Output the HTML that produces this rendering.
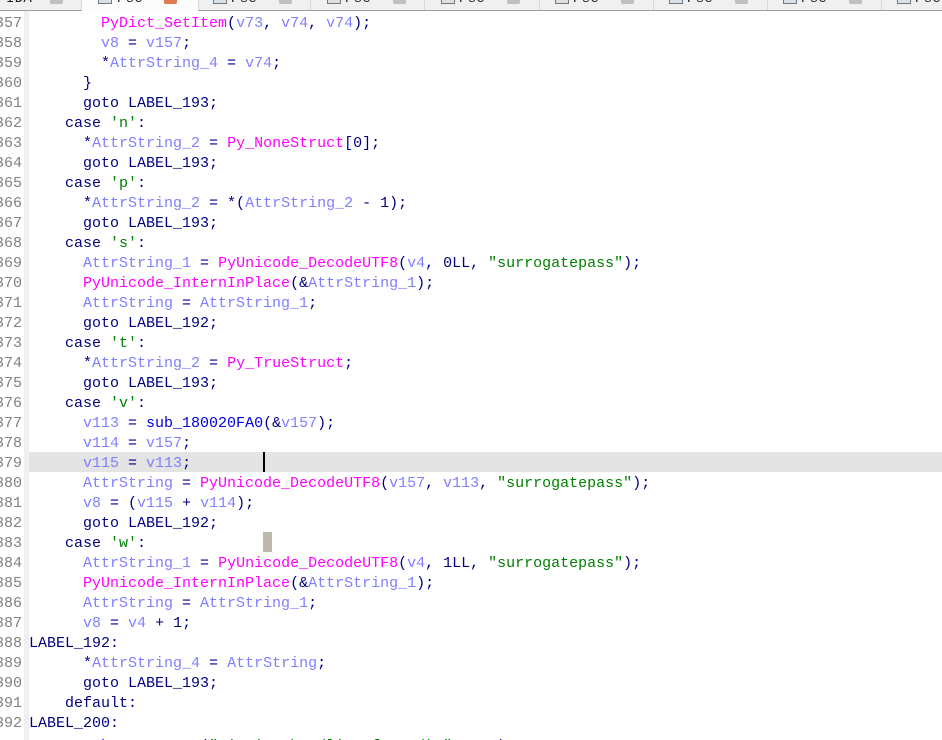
<!DOCTYPE html>
<html><head><meta charset="utf-8"><style>
html,body{margin:0;padding:0;background:#fff}
#r{position:relative;width:942px;height:740px;overflow:hidden;background:#fff;font:15px/20px "Liberation Mono",monospace;color:#000080}
.l{position:absolute;left:29px;white-space:pre;height:20px;margin-top:2px}
.n{position:absolute;left:-5px;width:27px;text-align:right;color:#808080;white-space:pre;height:20px;margin-top:2px}
i{font-style:normal;color:#8080ff}
b{font-weight:normal;color:#ff00ff}
u{text-decoration:none;color:#008000}
s{text-decoration:none;color:#0000e0}
.tb{position:absolute;left:0;top:0;width:942px;height:10px;background:#f0f0f0;border-bottom:1px solid #a0a0a0;overflow:hidden}
.t{position:absolute;top:-9px;font:14px/16px "Liberation Mono",monospace;color:#222;white-space:pre;letter-spacing:.3px}
.ic{position:absolute;top:0;width:12px;height:3px;background:#d8e0e8;border:1px solid #777;border-top:0}
.c{position:absolute;top:0;width:13px;height:4px;background:#c0c0c0;border-radius:0 0 2px 2px}
.d{position:absolute;top:0;width:1px;height:10px;background:#d8d8d8}
</style></head><body><div id="r">
<div style="position:absolute;left:24px;top:11px;width:5px;height:729px;background:#f0f0f0"></div>
<div style="position:absolute;left:29px;top:452px;width:913px;height:20px;background:#e4e4e4"></div>
<div style="position:absolute;left:263px;top:532px;width:9px;height:20px;background:#bdb9ae"></div>
<div style="position:absolute;left:262.5px;top:452px;width:2px;height:20px;background:#000"></div>

<div class="n" style="top:12px">357</div><div class="l" style="top:12px">        <b>PyDict_SetItem</b>(<i>v73</i>, <i>v74</i>, <i>v74</i>);</div>
<div class="n" style="top:32px">358</div><div class="l" style="top:32px">        <i>v8</i> = <i>v157</i>;</div>
<div class="n" style="top:52px">359</div><div class="l" style="top:52px">        *<i>AttrString_4</i> = <i>v74</i>;</div>
<div class="n" style="top:72px">360</div><div class="l" style="top:72px">      }</div>
<div class="n" style="top:92px">361</div><div class="l" style="top:92px">      goto LABEL_193;</div>
<div class="n" style="top:112px">362</div><div class="l" style="top:112px">    case <u>'n'</u>:</div>
<div class="n" style="top:132px">363</div><div class="l" style="top:132px">      *<i>AttrString_2</i> = <b>Py_NoneStruct</b>[0];</div>
<div class="n" style="top:152px">364</div><div class="l" style="top:152px">      goto LABEL_193;</div>
<div class="n" style="top:172px">365</div><div class="l" style="top:172px">    case <u>'p'</u>:</div>
<div class="n" style="top:192px">366</div><div class="l" style="top:192px">      *<i>AttrString_2</i> = *(<i>AttrString_2</i> - 1);</div>
<div class="n" style="top:212px">367</div><div class="l" style="top:212px">      goto LABEL_193;</div>
<div class="n" style="top:232px">368</div><div class="l" style="top:232px">    case <u>'s'</u>:</div>
<div class="n" style="top:252px">369</div><div class="l" style="top:252px">      <i>AttrString_1</i> = <b>PyUnicode_DecodeUTF8</b>(<i>v4</i>, 0LL, <u>"surrogatepass"</u>);</div>
<div class="n" style="top:272px">370</div><div class="l" style="top:272px">      <b>PyUnicode_InternInPlace</b>(&amp;<i>AttrString_1</i>);</div>
<div class="n" style="top:292px">371</div><div class="l" style="top:292px">      <i>AttrString</i> = <i>AttrString_1</i>;</div>
<div class="n" style="top:312px">372</div><div class="l" style="top:312px">      goto LABEL_192;</div>
<div class="n" style="top:332px">373</div><div class="l" style="top:332px">    case <u>'t'</u>:</div>
<div class="n" style="top:352px">374</div><div class="l" style="top:352px">      *<i>AttrString_2</i> = <b>Py_TrueStruct</b>;</div>
<div class="n" style="top:372px">375</div><div class="l" style="top:372px">      goto LABEL_193;</div>
<div class="n" style="top:392px">376</div><div class="l" style="top:392px">    case <u>'v'</u>:</div>
<div class="n" style="top:412px">377</div><div class="l" style="top:412px">      <i>v113</i> = <s>sub_180020FA0</s>(&amp;<i>v157</i>);</div>
<div class="n" style="top:432px">378</div><div class="l" style="top:432px">      <i>v114</i> = <i>v157</i>;</div>
<div class="n" style="top:452px">379</div><div class="l" style="top:452px">      <i>v115</i> = <i>v113</i>;</div>
<div class="n" style="top:472px">380</div><div class="l" style="top:472px">      <i>AttrString</i> = <b>PyUnicode_DecodeUTF8</b>(<i>v157</i>, <i>v113</i>, <u>"surrogatepass"</u>);</div>
<div class="n" style="top:492px">381</div><div class="l" style="top:492px">      <i>v8</i> = (<i>v115</i> + <i>v114</i>);</div>
<div class="n" style="top:512px">382</div><div class="l" style="top:512px">      goto LABEL_192;</div>
<div class="n" style="top:532px">383</div><div class="l" style="top:532px">    case <u>'w'</u>:</div>
<div class="n" style="top:552px">384</div><div class="l" style="top:552px">      <i>AttrString_1</i> = <b>PyUnicode_DecodeUTF8</b>(<i>v4</i>, 1LL, <u>"surrogatepass"</u>);</div>
<div class="n" style="top:572px">385</div><div class="l" style="top:572px">      <b>PyUnicode_InternInPlace</b>(&amp;<i>AttrString_1</i>);</div>
<div class="n" style="top:592px">386</div><div class="l" style="top:592px">      <i>AttrString</i> = <i>AttrString_1</i>;</div>
<div class="n" style="top:612px">387</div><div class="l" style="top:612px">      <i>v8</i> = <i>v4</i> + 1;</div>
<div class="n" style="top:632px">388</div><div class="l" style="top:632px">LABEL_192:</div>
<div class="n" style="top:652px">389</div><div class="l" style="top:652px">      *<i>AttrString_4</i> = <i>AttrString</i>;</div>
<div class="n" style="top:672px">390</div><div class="l" style="top:672px">      goto LABEL_193;</div>
<div class="n" style="top:692px">391</div><div class="l" style="top:692px">    default:</div>
<div class="n" style="top:712px">392</div><div class="l" style="top:712px">LABEL_200:</div>
<div class="l" style="top:735px">      <s>sub_180010110</s>(<u>"Missing handling for %d)."</u>, <i>v97</i>);</div>

<div class="tb">
<div class="d" style="left:81px"></div><div class="d" style="left:198px"></div><div class="d" style="left:310px"></div><div class="d" style="left:424px"></div><div class="d" style="left:539px"></div><div class="d" style="left:653px"></div><div class="d" style="left:767px"></div><div class="d" style="left:881px"></div>
<div class="t" style="left:6px">IDA</div><div class="c" style="left:50px"></div>
<div style="position:absolute;left:82px;top:0;width:116px;height:10px;background:#fbfbfb"></div>
<div class="ic" style="left:98px"></div><div class="t" style="left:117px">Pse</div><div class="c" style="left:164px;background:#e07850"></div>
<div class="ic" style="left:213px"></div><div class="t" style="left:231px">Pse</div><div class="c" style="left:279px"></div>
<div class="ic" style="left:327px"></div><div class="t" style="left:345px">Pse</div><div class="c" style="left:393px"></div>
<div class="ic" style="left:441px"></div><div class="t" style="left:459px">Pse</div><div class="c" style="left:507px"></div>
<div class="ic" style="left:555px"></div><div class="t" style="left:573px">Pse</div><div class="c" style="left:621px"></div>
<div class="ic" style="left:669px"></div><div class="t" style="left:687px">Pse</div><div class="c" style="left:735px"></div>
<div class="ic" style="left:783px"></div><div class="t" style="left:801px">Pse</div><div class="c" style="left:849px"></div>
<div class="ic" style="left:897px"></div><div class="t" style="left:915px">Pse</div>
</div>
<div style="position:absolute;left:82px;top:10px;width:116px;height:1px;background:#fbfbfb"></div>
</div></body></html>
